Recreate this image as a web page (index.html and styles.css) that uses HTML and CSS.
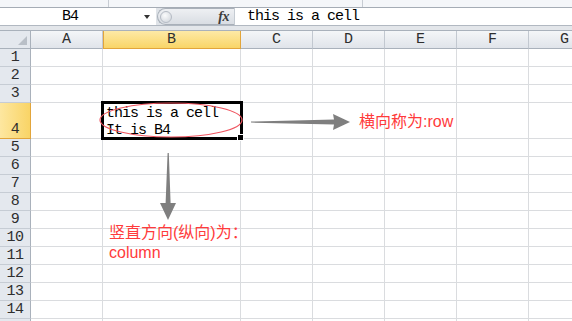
FILE: index.html
```html
<!DOCTYPE html>
<html lang="zh-CN">
<head>
    <meta charset="UTF-8">
    <title>Sheet1 - B4</title>
    <link rel="stylesheet" href="styles.css">
</head>
<body>
<div class="page">
    <div class="ribbon">
        <span class="group g1"></span>
        <span class="group g2"></span>
    </div>

    <div class="formula-bar">
        <div class="name-box">
            <span class="ref">B4</span>
            <span class="drop"></span>
        </div>
        <div class="fx-area">
            <span class="knob"></span>
            <span class="fx">fx</span>
        </div>
        <div class="formula">this is a cell</div>
    </div>
    <div class="gap"></div>

    <div class="sheet">
        <div class="corner"></div>
        <div class="col">A</div><div class="col active">B</div><div class="col">C</div><div class="col">D</div><div class="col">E</div><div class="col">F</div><div class="col">G</div>

        <div class="row">1</div><div class="cell"></div><div class="cell"></div><div class="cell"></div><div class="cell"></div><div class="cell"></div><div class="cell"></div><div class="cell"></div>
        <div class="row">2</div><div class="cell"></div><div class="cell"></div><div class="cell"></div><div class="cell"></div><div class="cell"></div><div class="cell"></div><div class="cell"></div>
        <div class="row">3</div><div class="cell"></div><div class="cell"></div><div class="cell"></div><div class="cell"></div><div class="cell"></div><div class="cell"></div><div class="cell"></div>
        <div class="row active">4</div><div class="cell"></div><div class="cell b4">this is a cell<br>It is B4</div><div class="cell"></div><div class="cell"></div><div class="cell"></div><div class="cell"></div><div class="cell"></div>
        <div class="row">5</div><div class="cell"></div><div class="cell"></div><div class="cell"></div><div class="cell"></div><div class="cell"></div><div class="cell"></div><div class="cell"></div>
        <div class="row">6</div><div class="cell"></div><div class="cell"></div><div class="cell"></div><div class="cell"></div><div class="cell"></div><div class="cell"></div><div class="cell"></div>
        <div class="row">7</div><div class="cell"></div><div class="cell"></div><div class="cell"></div><div class="cell"></div><div class="cell"></div><div class="cell"></div><div class="cell"></div>
        <div class="row">8</div><div class="cell"></div><div class="cell"></div><div class="cell"></div><div class="cell"></div><div class="cell"></div><div class="cell"></div><div class="cell"></div>
        <div class="row">9</div><div class="cell"></div><div class="cell"></div><div class="cell"></div><div class="cell"></div><div class="cell"></div><div class="cell"></div><div class="cell"></div>
        <div class="row">10</div><div class="cell"></div><div class="cell"></div><div class="cell"></div><div class="cell"></div><div class="cell"></div><div class="cell"></div><div class="cell"></div>
        <div class="row">11</div><div class="cell"></div><div class="cell"></div><div class="cell"></div><div class="cell"></div><div class="cell"></div><div class="cell"></div><div class="cell"></div>
        <div class="row">12</div><div class="cell"></div><div class="cell"></div><div class="cell"></div><div class="cell"></div><div class="cell"></div><div class="cell"></div><div class="cell"></div>
        <div class="row">13</div><div class="cell"></div><div class="cell"></div><div class="cell"></div><div class="cell"></div><div class="cell"></div><div class="cell"></div><div class="cell"></div>
        <div class="row">14</div><div class="cell"></div><div class="cell"></div><div class="cell"></div><div class="cell"></div><div class="cell"></div><div class="cell"></div><div class="cell"></div>
        <div class="row"></div><div class="cell"></div><div class="cell"></div><div class="cell"></div><div class="cell"></div><div class="cell"></div><div class="cell"></div><div class="cell"></div>
    </div>

    <!-- selection of B4 + hand-drawn marks on top -->
    <div class="selection"></div>
    <div class="fill-handle"></div>

    <svg class="marks" width="572" height="321" viewBox="0 0 572 321">
        <ellipse cx="171" cy="120" rx="71" ry="17" fill="none" stroke="#ef5560" stroke-width="1.2"/>
        <polygon points="251,121.6 334,119.5 333,114 350,122 333,130 334,124.6 251,122.6" fill="#7f7f7f"/>
        <polygon points="167.6,153 168.8,153 170.6,203 176,203 168,220 160,203 165.6,203" fill="#7f7f7f"/>
    </svg>

    <div class="note note-row">横向称为:row</div>
    <div class="note note-col">竖直方向(纵向)为：<br>column</div>
</div>
</body>
</html>
```

FILE: styles.css
```css
body {
    margin: 0;
    background: #fff;
    font-family: "Liberation Mono", monospace;
    color: #000;
}
.page {
    position: relative;
    width: 572px;
    height: 321px;
    overflow: hidden;
}

/* bottom edge of the ribbon */
.ribbon {
    display: flex;
    height: 7px;
    background: #f4f6f9;
    border-bottom: 1px solid #a5acb5;
}
.ribbon .group {
    border-right: 1px solid #c7ccd3;
}
.ribbon .g1 {
    width: 108px;
}
.ribbon .g2 {
    width: 253px;
}

/* formula bar */
.formula-bar {
    display: flex;
    height: 17px;
    background: #dfe3e8;
    border-bottom: 1px solid #b1b8c1;
}
.name-box {
    display: flex;
    align-items: center;
    width: 156px;
    background: #fff;
}
.name-box .ref {
    flex: 1;
    text-align: center;
    padding-right: 4px;
    font-size: 15px;
    letter-spacing: -1px;
    line-height: 17px;
}
.name-box .drop {
    width: 0;
    height: 0;
    border-left: 3.5px solid transparent;
    border-right: 3.5px solid transparent;
    border-top: 4px solid #333;
    margin-right: 6px;
}
.fx-area {
    display: flex;
    align-items: center;
    justify-content: space-between;
    width: 77px;
    padding: 0 5px 0 2px;
    box-sizing: border-box;
    background: linear-gradient(#eef0f3, #d9dde3);
    border: 1px solid #a9b0b9;
    border-right: none;
    border-radius: 9px 0 0 9px;
    margin-left: 1px;
}
.knob {
    width: 10px;
    height: 10px;
    border-radius: 50%;
    background: radial-gradient(circle at 40% 35%, #fafbfc, #cdd2d9);
    border: 1px solid #b5bbc4;
}
.fx {
    font-family: "Liberation Serif", serif;
    font-style: italic;
    font-weight: bold;
    font-size: 14px;
    color: #3c3c3c;
    letter-spacing: -0.5px;
}
.formula {
    flex: 1;
    background: #fff;
    border-left: 1px solid #c5cbd2;
    padding-left: 12px;
    font-size: 15px;
    letter-spacing: -1px;
    line-height: 17px;
}
.gap {
    height: 4px;
    background: #e3e6ea;
    border-bottom: 1px solid #a9b1bb;
}

/* grid */
.sheet {
    display: grid;
    grid-template-columns: 31px 72px 138px repeat(5, 72px);
    grid-template-rows: repeat(4, 18px) 36px repeat(11, 18px);
}
.sheet > div {
    box-sizing: border-box;
}
.corner {
    position: relative;
    background: #e4e8ee;
    border-right: 1px solid #a9b1bb;
    border-bottom: 1px solid #a9b1bb;
}
.corner::after {
    content: "";
    position: absolute;
    right: 3px;
    bottom: 3px;
    border-left: 9px solid transparent;
    border-bottom: 9px solid #b9bfc7;
}
.col {
    background: linear-gradient(#f4f6f8, #e0e4ea);
    border-right: 1px solid #c2c8d0;
    border-bottom: 1px solid #a9b1bb;
    text-align: center;
    font-size: 15px;
    line-height: 17px;
    color: #2e2e2e;
}
.col.active {
    background: linear-gradient(#fde9a6, #f9d567);
    border-right-color: #e2a53b;
    border-bottom-color: #e2a53b;
    box-shadow: inset 1px 0 #e2a53b;
}
.row {
    display: flex;
    align-items: flex-end;
    justify-content: center;
    background: #e4e8ee;
    border-right: 1px solid #a9b1bb;
    border-bottom: 1px solid #c6ccd4;
    font-size: 15px;
    letter-spacing: -0.5px;
    line-height: 17px;
    color: #2e2e2e;
}
.row.active {
    background: linear-gradient(90deg, #fde7a0, #f9d466);
    border-right-color: #e2a53b;
    border-bottom-color: #e2a53b;
}
.cell {
    border-right: 1px solid #dadcdf;
    border-bottom: 1px solid #dadcdf;
}
.cell.b4 {
    padding: 2px 0 0 3px;
    font-size: 15px;
    letter-spacing: -1px;
    line-height: 17px;
    white-space: nowrap;
}

/* overlays */
.selection {
    position: absolute;
    left: 101px;
    top: 101px;
    width: 142px;
    height: 39px;
    box-sizing: border-box;
    border: 3px solid #000;
}
.fill-handle {
    position: absolute;
    left: 237px;
    top: 134px;
    width: 5px;
    height: 5px;
    background: #000;
    border: 1px solid #fff;
}
.marks {
    position: absolute;
    left: 0;
    top: 0;
    pointer-events: none;
}
.note {
    position: absolute;
    color: #ff3b3b;
    font-family: "Liberation Sans", "Noto Sans CJK SC", sans-serif;
    font-size: 16px;
    line-height: 20px;
    white-space: nowrap;
}
.note-row {
    left: 359px;
    top: 112px;
}
.note-col {
    left: 109px;
    top: 223px;
}
```
